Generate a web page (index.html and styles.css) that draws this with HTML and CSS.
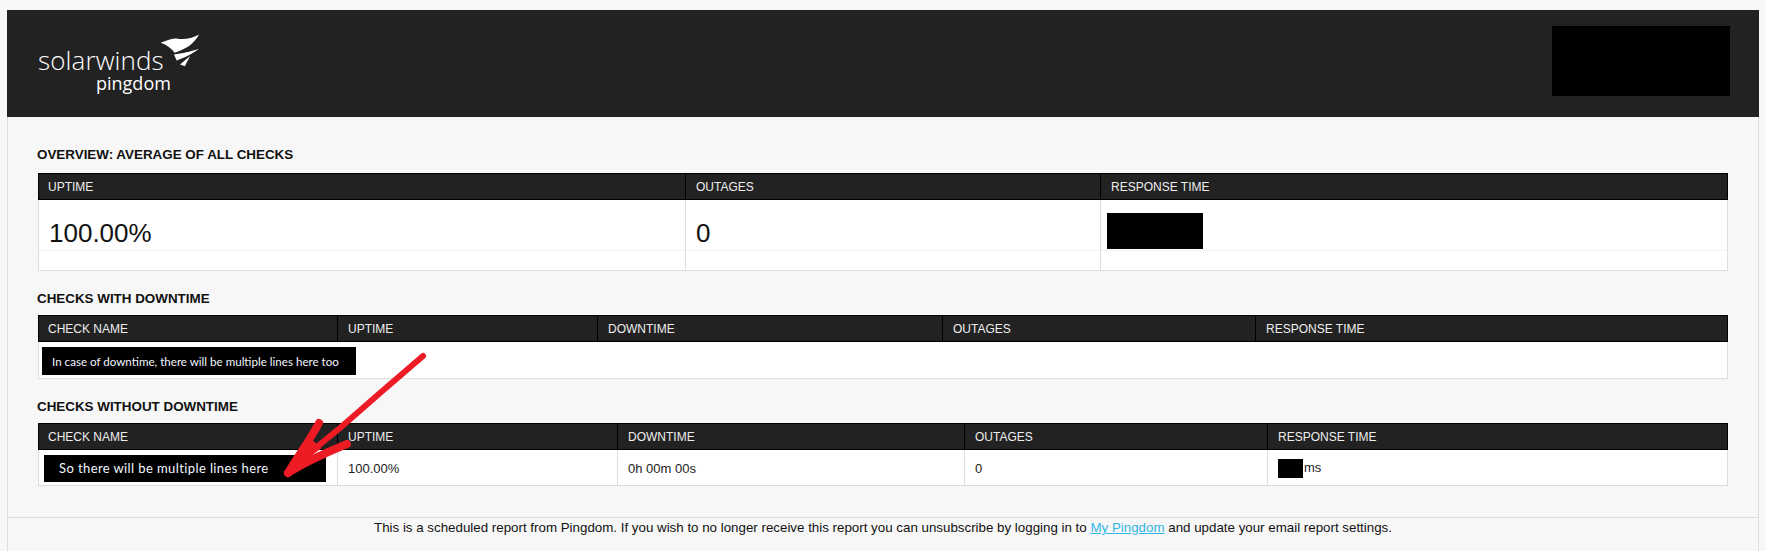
FILE: index.html
```html
<!DOCTYPE html>
<html lang="en">
<head>
<meta charset="utf-8">
<title>Pingdom report</title>
<link rel="stylesheet" href="styles.css">
</head>
<body>
<div class="wrap">
  <header class="top">
    <div class="logo">
      <div class="logo-main">
        <span class="logo-word">solarwinds</span>
        <svg class="logo-flame" width="40" height="35" viewBox="0 0 120 100"><path fill="#fff" d="M2 27 C20 20 35 12 50 14 C70 18 95 15 117 2 C110 15 100 28 85 38 C70 46 55 53 44 57 C35 45 20 33 2 27Z"/><path fill="#fff" d="M42 62 C65 60 95 52 117 45 C100 58 75 72 50 80Z"/><path fill="#fff" d="M60 92 C70 84 80 74 90 67 C85 78 78 88 75 97Z"/></svg>
      </div>
      <div class="logo-sub">pingdom</div>
    </div>
    <div class="redact top-redact"></div>
  </header>
  <main class="content">
    <h2 class="title first">OVERVIEW: AVERAGE OF ALL CHECKS</h2>
    <table class="report overview">
      <colgroup><col class="c-o1"><col class="c-o2"><col></colgroup>
      <thead><tr><th>UPTIME</th><th>OUTAGES</th><th>RESPONSE TIME</th></tr></thead>
      <tbody><tr><td class="big">100.00%<div class="rule"></div></td><td class="big">0<div class="rule"></div></td><td class="big"><div class="redact big-redact"></div><div class="rule"></div></td></tr></tbody>
    </table>
    <h2 class="title">CHECKS WITH DOWNTIME</h2>
    <table class="report">
      <colgroup><col class="c-d1"><col class="c-d2"><col class="c-d3"><col class="c-d4"><col></colgroup>
      <thead><tr><th>CHECK NAME</th><th>UPTIME</th><th>DOWNTIME</th><th>OUTAGES</th><th>RESPONSE TIME</th></tr></thead>
      <tbody><tr><td colspan="5" class="name-down"><div class="scrawl scrawl-down">In case of downtime, there will be multiple lines here too</div></td></tr></tbody>
    </table>
    <h2 class="title">CHECKS WITHOUT DOWNTIME</h2>
    <table class="report">
      <colgroup><col class="c-d1"><col class="c-w2"><col class="c-w3"><col class="c-w4"><col></colgroup>
      <thead><tr><th>CHECK NAME</th><th>UPTIME</th><th>DOWNTIME</th><th>OUTAGES</th><th>RESPONSE TIME</th></tr></thead>
      <tbody><tr><td class="name-up"><div class="scrawl scrawl-up">So there will be multiple lines here</div></td><td>100.00%</td><td>0h 00m 00s</td><td>0</td><td><span class="redact ms-redact"></span>ms</td></tr></tbody>
    </table>
  </main>
  <footer class="foot">This is a scheduled report from Pingdom. If you wish to no longer receive this report you can unsubscribe by logging in to <a href="#">My Pingdom</a> and update your email report settings.</footer>
</div>
<svg class="arrow" width="1766" height="551" viewBox="0 0 1766 551"><g fill="none" stroke="#ed1c24" stroke-linecap="round" stroke-linejoin="round"><path stroke-width="6" d="M423 356 L380 393 L340 428 L307 455 L287 473"/><path stroke-width="8" d="M319 423 C310 440 298 456 288 473"/><path stroke-width="8" d="M347 444 C330 451 308 460 288 473"/><path fill="#ed1c24" stroke-width="2" d="M288 473 L308 438 L320 448Z"/></g></svg>
</body>
</html>
```
FILE: styles.css
```css
* { box-sizing: border-box; }
html, body { margin: 0; padding: 0; }
body { background: #f7f7f7; font-family: "Liberation Sans", Arial, sans-serif; color: #111; height: 551px; overflow: hidden; position: relative; }
.wrap { margin: 10px 7px 0; }
.top { background: #222; height: 107px; display: flex; justify-content: space-between; align-items: flex-start; padding: 16px 29px 0 31px; }
.logo { color: #fff; width: 170px; padding-top: 3px; }
.logo-main { position: relative; height: 46px; padding-top: 18px; }
.logo-word { display: block; font-family: "Open Sans", sans-serif; font-weight: 300; font-size: 26px; line-height: 26px; letter-spacing: 0.1px; }
.logo-flame { position: absolute; left: 122px; top: 4px; }
.logo-sub { font-family: "Open Sans", sans-serif; font-size: 18px; line-height: 16px; margin-left: 58px; }
.redact { background: #000; display: block; }
.top-redact { width: 178px; height: 70px; }
.content { border-left: 1px solid #ddd; border-right: 1px solid #ddd; padding: 0 30px; height: 400px; }
.title { margin: 0 0 0 -1px; font-size: 13.4px; font-weight: bold; line-height: 16px; color: #111; height: 44px; padding-top: 20px; }
.title.first { height: 56px; padding-top: 30px; }
.report { width: 1690px; table-layout: fixed; border-collapse: collapse; background: #fff; }
.report th { background: #222; color: #eee; font-size: 12px; font-weight: normal; text-align: left; height: 26px; padding: 0 10px; border: 1px solid #000; }
.report th:first-child { padding-left: 9px; }
.report td { font-size: 13px; padding: 2px 10px 0; height: 36px; border: 1px solid #ddd; color: #222; vertical-align: middle; }
.c-o1 { width: 647px; }
.c-o2 { width: 415px; }
.c-d1 { width: 299px; }
.c-d2 { width: 260px; }
.c-d3 { width: 345px; }
.c-d4 { width: 313px; }
.c-w2 { width: 280px; }
.c-w3 { width: 347px; }
.c-w4 { width: 303px; }
.report td.big { font-size: 26px; height: 71px; padding: 18px 10px 0; position: relative; color: #111; vertical-align: top; line-height: 30px; }
.rule { position: absolute; left: 0; right: 0; top: 50px; border-top: 1px solid #f2f2f2; }
.big-redact { width: 96px; height: 36px; margin: -5px 0 0 -4px; }
.report td.name-down { padding: 5px 3px 3px; }
.report td.name-up { padding: 1px 8px 0 5px; }
.scrawl { background: #000; color: #f2f7ff; font-family: "Lato", sans-serif; display: flex; align-items: center; white-space: nowrap; }
.scrawl-down { width: 314px; height: 28px; padding-left: 10px; font-size: 11.6px; }
.scrawl-up { width: 282px; height: 27px; padding-left: 15px; font-size: 13px; letter-spacing: 0.4px; }
.ms-redact { display: inline-block; width: 25px; height: 19px; vertical-align: middle; margin-right: 1px; }
.foot { border: 1px solid #ddd; border-width: 1px 1px 0; font-size: 13.33px; text-align: center; height: 40px; padding-top: 2px; color: #111; line-height: 15px; }
.foot a { color: #33b5e5; }
.arrow { position: absolute; left: 0; top: 0; pointer-events: none; }
```
